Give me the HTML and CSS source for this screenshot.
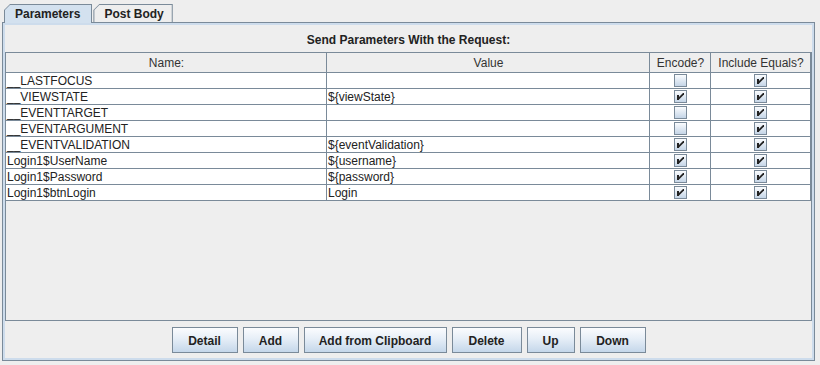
FILE: index.html
```html
<!DOCTYPE html>
<html>
<head>
<meta charset="utf-8">
<link rel="stylesheet" href="styles.css">
</head>
<body>
<svg width="0" height="0" class="defs">
  <defs>
    <linearGradient id="cbg" x1="0" y1="0" x2="0" y2="1">
      <stop offset="0" stop-color="#fdfeff"/>
      <stop offset="1" stop-color="#c2d3e6"/>
    </linearGradient>
    <symbol id="cb" viewBox="0 0 13 13">
      <rect x="0.5" y="0.5" width="12" height="12" fill="url(#cbg)" stroke="#7a8a99"/>
    </symbol>
    <symbol id="cbc" viewBox="0 0 13 13">
      <rect x="0.5" y="0.5" width="12" height="12" fill="url(#cbg)" stroke="#7a8a99"/>
      <rect x="3" y="5" width="2" height="5" fill="#222"/>
      <polygon points="5,7 9,3 10,3 10,4.5 5,9.5" fill="#222"/>
    </symbol>
  </defs>
</svg>
<div class="window">
  <div class="tabs">
    <div class="tab sel"><span class="tab-in">Parameters</span></div>
    <div class="tab"><span class="tab-in">Post Body</span></div>
  </div>
  <div class="panel">
    <div class="title">Send Parameters With the Request:</div>
    <div class="scroll">
      <table class="grid">
        <colgroup>
          <col class="c-name"><col class="c-val"><col class="c-enc"><col class="c-eq">
        </colgroup>
        <thead>
          <tr><th>Name:</th><th>Value</th><th>Encode?</th><th>Include Equals?</th></tr>
        </thead>
        <tbody>
          <tr><td>__LASTFOCUS</td><td></td><td class="ck"><svg class="box"><use href="#cb"/></svg></td><td class="ck"><svg class="box"><use href="#cbc"/></svg></td></tr>
          <tr><td>__VIEWSTATE</td><td>${viewState}</td><td class="ck"><svg class="box"><use href="#cbc"/></svg></td><td class="ck"><svg class="box"><use href="#cbc"/></svg></td></tr>
          <tr><td>__EVENTTARGET</td><td></td><td class="ck"><svg class="box"><use href="#cb"/></svg></td><td class="ck"><svg class="box"><use href="#cbc"/></svg></td></tr>
          <tr><td>__EVENTARGUMENT</td><td></td><td class="ck"><svg class="box"><use href="#cb"/></svg></td><td class="ck"><svg class="box"><use href="#cbc"/></svg></td></tr>
          <tr><td>__EVENTVALIDATION</td><td>${eventValidation}</td><td class="ck"><svg class="box"><use href="#cbc"/></svg></td><td class="ck"><svg class="box"><use href="#cbc"/></svg></td></tr>
          <tr><td>Login1$UserName</td><td>${username}</td><td class="ck"><svg class="box"><use href="#cbc"/></svg></td><td class="ck"><svg class="box"><use href="#cbc"/></svg></td></tr>
          <tr><td>Login1$Password</td><td>${password}</td><td class="ck"><svg class="box"><use href="#cbc"/></svg></td><td class="ck"><svg class="box"><use href="#cbc"/></svg></td></tr>
          <tr><td>Login1$btnLogin</td><td>Login</td><td class="ck"><svg class="box"><use href="#cbc"/></svg></td><td class="ck"><svg class="box"><use href="#cbc"/></svg></td></tr>
        </tbody>
      </table>
    </div>
    <div class="buttons">
      <button class="btn w-detail">Detail</button>
      <button class="btn w-add">Add</button>
      <button class="btn w-clip">Add from Clipboard</button>
      <button class="btn w-delete">Delete</button>
      <button class="btn w-up">Up</button>
      <button class="btn w-down">Down</button>
    </div>
  </div>
</div>
</body>
</html>
```
FILE: styles.css
```css
* { box-sizing: border-box; }
html, body { margin: 0; padding: 0; }
body {
  background: #eeeeee;
  font-family: "Liberation Sans", Arial, sans-serif;
  font-size: 12px;
  color: #222222;
  width: 820px;
  height: 365px;
  overflow: hidden;
}
.defs { position: absolute; width: 0; height: 0; }
.window { padding: 4px 5px 0 2px; }
.tabs {
  display: flex;
  padding-left: 2px;
  height: 18px;
  position: relative;
  z-index: 1;
}
.tab {
  height: 19px;
  background: #7a8a99;
  padding: 1px 1px 0 1px;
  clip-path: polygon(6px 0, 100% 0, 100% 100%, 0 100%, 0 6px);
}
.tab-in {
  display: block;
  height: 100%;
  line-height: 18px;
  font-weight: bold;
  background: #eeeeee;
  clip-path: polygon(5px 0, 100% 0, 100% 100%, 0 100%, 0 5px);
  padding: 0 8px 0 10px;
}
.tab:not(.sel) { height: 18px; margin-left: 1px; }
.tab.sel .tab-in { background: #d3e1ef; padding: 0 11px 0 10px; }
.panel {
  height: 339px;
  border: 1px solid #7a8a99;
  box-shadow: inset 0 0 0 2px #cddcec;
  padding: 2px;
  display: flex;
  flex-direction: column;
}
.title {
  height: 27px;
  line-height: 30px;
  text-align: center;
  font-weight: bold;
}
.scroll {
  height: 269px;
  border: 1px solid #7a8a99;
  background: #eeeeee;
}
.grid {
  border-collapse: separate;
  border-spacing: 0;
  table-layout: fixed;
  width: 805px;
}
.c-name { width: 321px; }
.c-val { width: 323px; }
.c-enc { width: 61px; }
.c-eq { width: 100px; }
.grid th, .grid td {
  border-right: 1px solid #7a8a99;
  border-bottom: 1px solid #7a8a99;
  padding: 0 0 0 1px;
  white-space: nowrap;
  overflow: hidden;
}
.grid th {
  height: 20px;
  padding-top: 1px;
  font-weight: normal;
  text-align: center;
  background: #eeeeee;
  color: #333333;
  line-height: 18px;
}
.grid td {
  height: 16px;
  padding-top: 1px;
  line-height: 14px;
  background: #ffffff;
}
.grid td.ck { padding: 0; }
.box { display: block; width: 13px; height: 13px; margin: 0 auto; }
.buttons {
  display: flex;
  justify-content: center;
  gap: 5px;
  padding-top: 6px;
}
.btn {
  height: 26px;
  padding: 1px 0 0 0;
  border: 1px solid #7a8a99;
  border-radius: 0;
  background: linear-gradient(to bottom, #fbfcfe 0%, #e6eef7 45%, #c5d7ea 100%);
  font-family: "Liberation Sans", Arial, sans-serif;
  font-size: 12px;
  font-weight: bold;
  color: #222222;
  margin: 0;
  text-align: center;
}
.w-detail { width: 66px; }
.w-add { width: 56px; }
.w-clip { width: 143px; }
.w-delete { width: 70px; }
.w-up { width: 48px; }
.w-down { width: 66px; }
```
